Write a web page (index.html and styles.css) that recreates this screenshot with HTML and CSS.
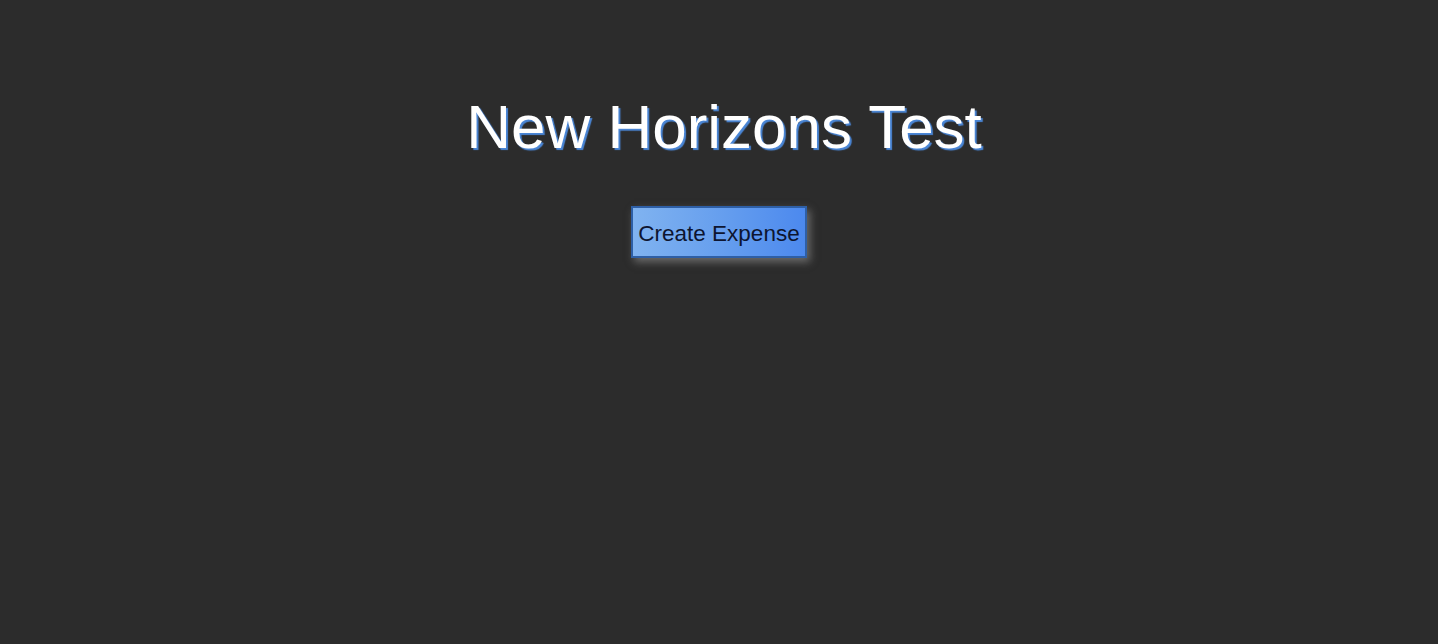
FILE: index.html
```html
<!DOCTYPE html>
<html lang="en">
<head>
    <meta charset="UTF-8">
    <meta name="viewport" content="width=device-width, initial-scale=1.0">
    <title>New Horizons Test</title>
    <link rel="stylesheet" href="styles.css">
</head>
<body>
    <div class="app">
        <h1 class="title">New Horizons Test</h1>
        <button class="create-btn" type="button">Create Expense</button>
    </div>
</body>
</html>
```

FILE: styles.css
```css
html, body { margin: 0; padding: 0; height: 100%; }
body { background: #2c2c2c; font-family: "Liberation Sans", Arial, sans-serif; }
.app { display: flex; flex-direction: column; align-items: center; padding-top: 90px; }
.title { margin: 0; padding-left: 10px; color: #fff; font-size: 62px; font-weight: 400; line-height: 74px; text-shadow: 2px 2px 1px #4a86d6; }
.create-btn {
    margin-top: 42px;
    width: 176px; height: 52px;
    padding: 3px 0 0;
    font-family: "Liberation Sans", Arial, sans-serif; font-size: 22.5px; color: #0d1530;
    background: linear-gradient(90deg, #80b3f0 0%, #649dee 55%, #4c89ee 100%);
    border: 2px solid #2e5fa6;
    box-shadow: 3px 4px 8px rgba(170, 170, 170, 0.5);
    cursor: pointer;
}
```
